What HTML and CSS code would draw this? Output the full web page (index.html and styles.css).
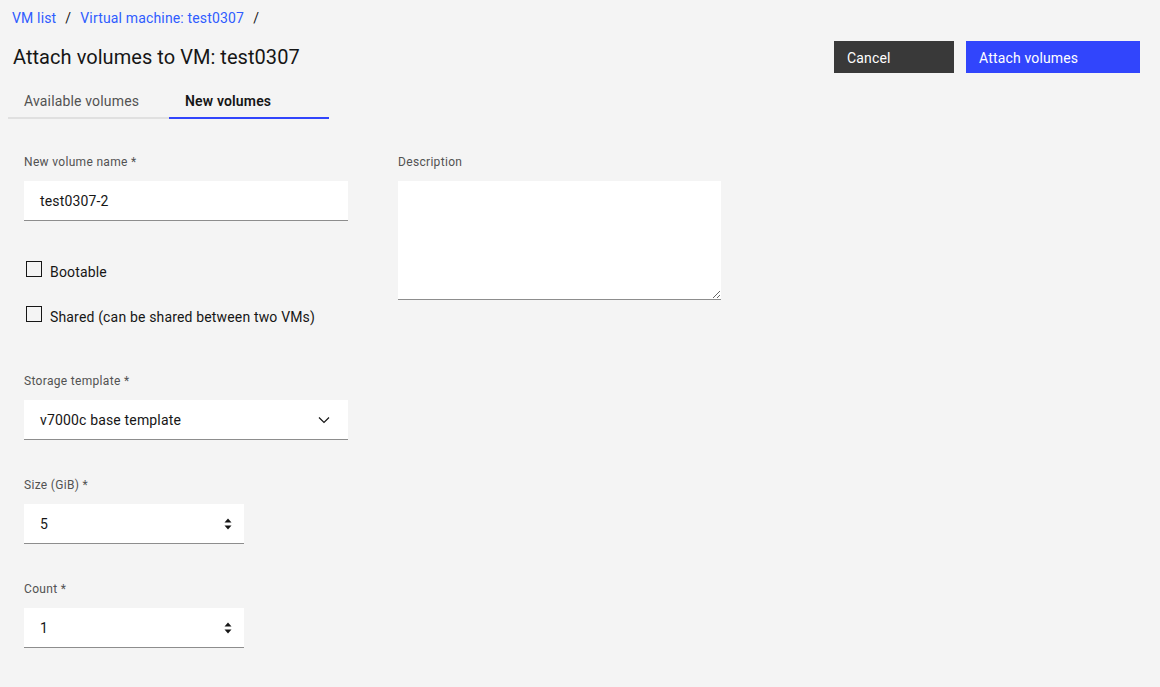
FILE: index.html
```html
<!DOCTYPE html>
<html lang="en">
<head>
  <meta charset="UTF-8" />
  <title>Attach volumes to VM: test0307</title>
  <link rel="stylesheet" href="styles.css">
</head>
<body>

  <nav class="breadcrumb">
    <a href="#">VM list</a>
    <span class="sep">/</span>
    <a href="#">Virtual machine: test0307</a>
    <span class="sep">/</span>
  </nav>

  <div class="page-header">
    <h1>Attach volumes to VM: test0307</h1>
    <div class="actions">
      <button class="btn btn-secondary">Cancel</button>
      <button class="btn btn-primary">Attach volumes</button>
    </div>
  </div>

  <div class="tabs">
    <a href="#" class="tab">Available volumes</a>
    <a href="#" class="tab active">New volumes</a>
  </div>

  <form class="volume-form">
    <div class="col">
      <div class="field">
        <label class="label">New volume name *</label>
        <div class="input"><span>test0307-2</span></div>
      </div>

      <div class="checks">
        <label class="check"><span class="box"></span>Bootable</label>
        <label class="check"><span class="box"></span>Shared (can be shared between two VMs)</label>
      </div>

      <div class="field">
        <label class="label">Storage template *</label>
        <div class="input">
          <span>v7000c base template</span>
          <!-- chevron down -->
          <svg class="chevron" width="16" height="16" viewBox="0 0 16 16">
            <path d="M3 5.5l5 5 5-5" fill="none" stroke="#161616" stroke-width="1.2"/>
          </svg>
        </div>
      </div>

      <div class="field short">
        <label class="label">Size (GiB) *</label>
        <div class="input">
          <span>5</span>
          <svg class="spinner" width="8" height="14" viewBox="0 0 8 14">
            <path d="M4 1.5l3.5 4H.5z" fill="#161616"/>
            <path d="M4 12.5l3.5-4H.5z" fill="#161616"/>
          </svg>
        </div>
      </div>

      <div class="field short">
        <label class="label">Count *</label>
        <div class="input">
          <span>1</span>
          <svg class="spinner" width="8" height="14" viewBox="0 0 8 14">
            <path d="M4 1.5l3.5 4H.5z" fill="#161616"/>
            <path d="M4 12.5l3.5-4H.5z" fill="#161616"/>
          </svg>
        </div>
      </div>
    </div>

    <div class="col">
      <div class="field">
        <label class="label">Description</label>
        <textarea class="textarea"></textarea>
      </div>
    </div>
  </form>

</body>
</html>
```

FILE: styles.css
```css
* {
  margin: 0;
  padding: 0;
  box-sizing: border-box;
}

body {
  background: #f4f4f4;
  font-family: Roboto, 'Noto Sans', sans-serif;
  color: #161616;
  letter-spacing: 0.16px;
  height: 687px;
  overflow: hidden;
}

/* Breadcrumb */
.breadcrumb {
  padding: 9px 12px 0;
  font-size: 14px;
  line-height: 18px;
  display: flex;
  gap: 9px;
}

.breadcrumb a {
  color: #2f5cff;
  text-decoration: none;
}

.breadcrumb .sep {
  color: #161616;
}

/* Header */
.page-header {
  margin-top: 14px;
  padding: 0 20px 0 13px;
  display: flex;
  justify-content: space-between;
  align-items: center;
  height: 32px;
}

.page-header h1 {
  font-size: 20px;
  font-weight: 400;
  line-height: 28px;
  letter-spacing: 0.05px;
}

.actions {
  display: flex;
  gap: 12px;
}

.btn {
  height: 32px;
  border: none;
  font-family: inherit;
  font-size: 14px;
  letter-spacing: 0.16px;
  color: #fff;
  text-align: left;
  padding: 2px 13px 0;
  cursor: pointer;
}

.btn-secondary {
  background: #393939;
  width: 120px;
}

.btn-primary {
  background: #3145fc;
  width: 174px;
}

/* Tabs */
.tabs {
  margin-top: 15px;
  padding-left: 8px;
  display: flex;
}

.tab {
  width: 160px;
  padding: 4px 16px 7px;
  font-size: 14px;
  line-height: 18px;
  color: #525252;
  text-decoration: none;
  border-bottom: 2px solid #e0e0e0;
}

.tab:first-child {
  width: 161px;
}

.tab.active {
  color: #161616;
  font-weight: 600;
  border-bottom-color: #3145fc;
}

/* Form */
.volume-form {
  padding: 34px 0 0 24px;
  display: flex;
  gap: 50px;
}

.col {
  width: 324px;
  display: flex;
  flex-direction: column;
  gap: 36px;
}

.col:last-child {
  width: 323px;
}

.label {
  display: block;
  font-size: 12px;
  line-height: 16px;
  letter-spacing: 0.32px;
  color: #525252;
  padding-top: 1px;
  margin-bottom: 11px;
}

.input {
  height: 40px;
  background: #fff;
  border-bottom: 1px solid #8d8d8d;
  padding: 0 16px;
  display: flex;
  align-items: center;
  justify-content: space-between;
  font-size: 14px;
}

.field.short {
  width: 220px;
}

.spinner {
  margin-right: -4px;
}

.checks {
  display: flex;
  flex-direction: column;
  gap: 23px;
  margin-top: 4px;
  margin-bottom: 8px;
}

.check {
  display: flex;
  align-items: flex-start;
  font-size: 14px;
  line-height: 22px;
  color: #161616;
}

.check .box {
  width: 16px;
  height: 16px;
  border: 1px solid #161616;
  margin: 0 8px 0 2px;
  background: transparent;
}

.textarea {
  display: block;
  width: 323px;
  height: 119px;
  background: #fff;
  border: none;
  border-bottom: 1px solid #8d8d8d;
  font-family: inherit;
  font-size: 14px;
  padding: 11px 16px;
  outline: none;
}
```
